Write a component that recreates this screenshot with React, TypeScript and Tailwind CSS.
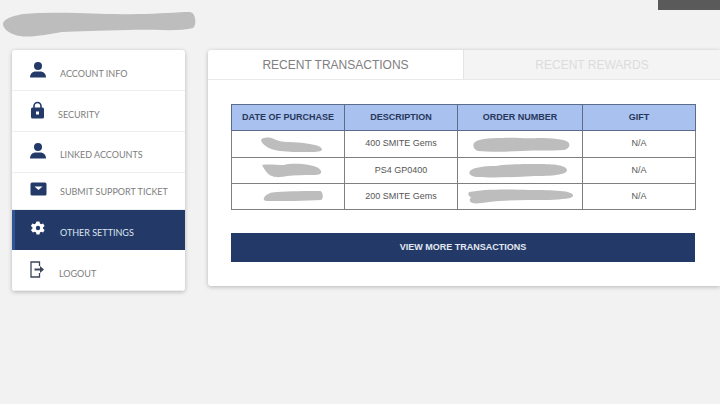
const navy = "#233a68";

function UserIcon() {
  return (
    <svg width="18" height="18" viewBox="0 0 18 18" fill={navy}>
      <circle cx="9" cy="5" r="4" />
      <path d="M1 16.500c0-4 3-6 5.500-6h5c2.500 0 5.500 2 5.500 6z" />
    </svg>
  );
}

function LockIcon() {
  return (
    <svg width="15" height="18" viewBox="0 0 15 18">
      <path d="M4 8V5a3.500 3.500 0 0 1 7 0v3" fill="none" stroke={navy} strokeWidth="1.600" />
      <rect x="1" y="6.500" width="13" height="11" rx="1.500" fill={navy} />
      <rect x="6" y="10.500" width="3" height="3" fill="#fff" />
    </svg>
  );
}

function MailIcon() {
  return (
    <svg width="17" height="14" viewBox="0 0 17 14">
      <rect x="0.500" y="0.500" width="16" height="13" rx="1.500" fill={navy} />
      <path d="M4.500 4.500h8L8.500 8z" fill="#fff" />
    </svg>
  );
}

function GearIcon() {
  return (
    <svg width="16" height="16" viewBox="0 0 16 16">
      <path
        fill="#fff"
        d="M6.500 0.500h3l.4 2 1.300.7 1.900-.8 1.500 2.600-1.500 1.300v1.400l1.500 1.300-1.500 2.600-1.900-.8-1.300.7-.4 2h-3l-.4-2-1.300-.7-1.900.8L.9 9.000 2.400 7.700V6.300L.9 5.000l1.500-2.600 1.900.8 1.300-.7z"
      />
      <circle cx="8" cy="7" r="2.200" fill={navy} />
    </svg>
  );
}

function LogoutIcon() {
  return (
    <svg width="15" height="17" viewBox="0 0 15 17" fill="none" stroke="#3c4658" strokeWidth="1.300">
      <path d="M9.500 5V1H1v15h8.500v-4" />
      <path d="M4.500 8.500h6" strokeWidth="2" />
      <path d="M10 5l4 3.500L10 12z" fill="#3c4658" stroke="none" />
    </svg>
  );
}

// grey scribbles over the private values
function Blob({ w, h, d }: { w: number; h: number; d: string }) {
  return (
    <svg width={w} height={h} viewBox={`0 0 ${w} ${h}`} className="block">
      <path d={d} fill="#bdbdbd" />
    </svg>
  );
}

const menu = [
  { label: "ACCOUNT INFO", icon: <UserIcon />, col: "w-[48px] pl-[17px]", h: "h-[41px]", textShift: "pt-[8px]", iconShift: "mb-[0px]" },
  { label: "SECURITY", icon: <LockIcon />, col: "w-[46px] pl-[18px]", h: "h-[41px]", textShift: "pt-[8px]", iconShift: "mb-[2px]" },
  { label: "LINKED ACCOUNTS", icon: <UserIcon />, col: "w-[48px] pl-[17px]", h: "h-[41px]", textShift: "pt-[6px]", iconShift: "mb-[2px]" },
  { label: "SUBMIT SUPPORT TICKET", icon: <MailIcon />, col: "w-[48px] pl-[18px]", h: "h-[37px]", textShift: "pt-[2px]", iconShift: "mb-[4px]" },
  { label: "OTHER SETTINGS", icon: <GearIcon />, col: "w-[45px] pl-[15px]", h: "h-[40px]", textShift: "pt-[6px]", iconShift: "mb-[2px]", active: true },
  { label: "LOGOUT", icon: <LogoutIcon />, col: "w-[47px] pl-[18px]", h: "h-[41px]", textShift: "pt-[7px]", iconShift: "mb-[1px]" },
];

const rows = [
  {
    desc: "400 SMITE Gems",
    datePad: "pl-[28px]",
    orderPad: "pl-[15px]",
    date: "M1 3C3 0 9 0 14 2c4 2 8 3 14 3 9 0 18 1 27 3 5 1 7 3 7 5-2 2-8 2-14 2-10 0-20 0-28-1C12 13 2 9 1 3z",
    order: "M1 6c3-4 14-5 28-5 14-1 22 1 36 0 14 0 26 1 30 4 3 3 1 7-4 8-14 1-28 0-42 1-16 1-34 1-44 0C2 13-1 10 1 6z",
  },
  {
    desc: "PS4 GP0400",
    datePad: "pl-[29px]",
    orderPad: "pl-[11px]",
    date: "M1 2c7-1 14 0 22 0 8-2 18-1 25 0 6 1 11 3 12 6 1 3-2 4-8 4-9 0-18 0-26 1-5 1-11 2-15 0C7 12 3 6 1 2z",
    order: "M1 8c2-3 12-5 26-5 10-2 30-2 42-2 16 0 28 1 29 6 0 4-10 6-32 6-20 1-42 2-56 1C2 14-1 11 1 8z",
  },
  {
    desc: "200 SMITE Gems",
    datePad: "pl-[31px]",
    orderPad: "pl-[10px]",
    date: "M1 9c1-3 6-6 13-6 12-1 30-1 43-1 3 0 4 8 1 9-14 1-41 1-54 1-2 0-4-1-3-3z",
    order: "M1 3c14-3 40-3 60-2 18 0 42 0 44 5 1 4-10 4-24 5-22 0-44 0-60 2-8 1-18 3-19-1-1-2 1-3 1-4C0 7 0 5 1 3z",
  },
];

const cell = "border border-[#7f7f7f]";
const head = "border border-[#5b6b8a]";

export default function App() {
  return (
    <div className="h-[404px] w-[720px] overflow-hidden bg-[#f2f2f2] font-['Liberation_Sans',sans-serif]">
      <div className="flex h-[50px] items-start justify-between">
        <div className="pl-[3px] pt-[12px]">
          <Blob
            w={193}
            h={25}
            d="M0 11C3 5 16 1 40 1c40-1 60 2 95 1 20 0 40-2 52-2 6 1 7 13 3 16-14 4-40 1-65 2-30 1-50 1-66 2-14 2-30 6-42 4C8 23-1 17 0 11z"
          />
        </div>
        <div className="h-[10px] w-[62px] bg-[#5a5a5a]" />
      </div>

      <div className="flex items-start gap-[23px] pl-[12px]">
        <nav className="w-[173px] overflow-hidden rounded-[3px] bg-white shadow-[0_1px_4px_rgba(0,0,0,0.25)]">
          {menu.map((m) => (
            <div
              key={m.label}
              className={`flex items-center ${m.h} ${
                m.active
                  ? "border-l-[3px] border-[#2f5597] bg-[#233a68] text-[#dfe5f0]"
                  : "border-b border-[#eeeeee] text-[#7d7d7d]"
              }`}
            >
              <div className={`shrink-0 ${m.col} ${m.iconShift}`}>{m.icon}</div>
              <span className={`whitespace-nowrap font-['Lato',sans-serif] text-[9px] ${m.textShift}`}>{m.label}</span>
            </div>
          ))}
        </nav>

        <main className="h-[236px] w-[512px] rounded-l-[3px] bg-white shadow-[0_1px_4px_rgba(0,0,0,0.25)]">
          <div className="flex h-[30px] border-b border-[#e8e8e8]">
            <div className="flex w-[255px] items-center justify-center text-[12px] text-[#808080]">
              RECENT TRANSACTIONS
            </div>
            <div className="flex flex-1 items-center justify-center border-l border-[#e4e4e4] bg-[#f4f4f4] text-[12px] text-[#dcdcdc]">
              RECENT REWARDS
            </div>
          </div>

          <div className="px-[23px] pt-[24px]">
            <table className="w-[465px] table-fixed border-collapse border border-[#7f7f7f] text-center text-[9px]">
              <colgroup>
                <col className="w-[113px]" />
                <col className="w-[113px]" />
                <col className="w-[125px]" />
                <col className="w-[113px]" />
              </colgroup>
              <thead>
                <tr className="h-[26px] bg-[#a9c1ef] font-bold text-[#27375c]">
                  <th className={head}>DATE OF PURCHASE</th>
                  <th className={head}>DESCRIPTION</th>
                  <th className={head}>ORDER NUMBER</th>
                  <th className={head}>GIFT</th>
                </tr>
              </thead>
              <tbody className="text-[#555555]">
                {rows.map((r, i) => (
                  <tr key={r.desc} className={i === 0 ? "h-[27px]" : "h-[26px]"}>
                    <td className={cell}>
                      <div className={r.datePad}>
                        <Blob w={62} h={15} d={r.date} />
                      </div>
                    </td>
                    <td className={cell}>{r.desc}</td>
                    <td className={cell}>
                      <div className={r.orderPad}>
                        <Blob w={106} h={15} d={r.order} />
                      </div>
                    </td>
                    <td className={cell}>N/A</td>
                  </tr>
                ))}
              </tbody>
            </table>

            <div className="mt-[23px] flex h-[29px] w-[464px] items-center justify-center bg-[#233a68] text-[9px] font-bold text-[#e4e8f1]">
              VIEW MORE TRANSACTIONS
            </div>
          </div>
        </main>
      </div>
    </div>
  );
}
